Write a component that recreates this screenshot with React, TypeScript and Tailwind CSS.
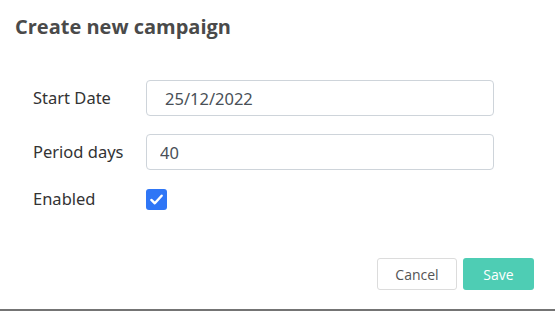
import React, { useState } from 'react';

export default function App() {
  const [startDate, setStartDate] = useState('25/12/2022');
  const [period, setPeriod] = useState('40');
  const [enabled, setEnabled] = useState(true);

  return (
    <div className="relative w-[555px] h-[311px] bg-white flex flex-col overflow-hidden font-['Noto_Sans',sans-serif]">
      {/* Header */}
      <div className="px-[15px] pt-[14px]">
        <h2 className="text-[20px] leading-[26px] font-bold text-[#4a4a4a] font-['Open_Sans',sans-serif]">
          Create new campaign
        </h2>
      </div>

      {/* Form */}
      <div className="flex flex-col gap-[18px] pl-[33px] pr-[61px] pt-[40px]">
        <div className="flex items-center h-[36px]">
          <label className="w-[113px] text-[16.5px] text-[#333]">Start Date</label>
          <input
            value={startDate}
            onChange={e => setStartDate(e.target.value)}
            className="flex-1 h-[36px] rounded-[4px] border border-[#ced4da] pl-[18px] text-[16.5px] text-[#495057] outline-none"
          />
        </div>
        <div className="flex items-center h-[36px]">
          <label className="w-[113px] text-[16.5px] text-[#333]">Period days</label>
          <input
            value={period}
            onChange={e => setPeriod(e.target.value)}
            className="flex-1 h-[36px] rounded-[4px] border border-[#ced4da] pl-[13px] text-[16.5px] text-[#495057] outline-none"
          />
        </div>
        <div className="flex items-center h-[24px] -mt-[1px]">
          <label className="w-[113px] text-[16.5px] text-[#333]">Enabled</label>
          <button
            onClick={() => setEnabled(v => !v)}
            className={`w-[21px] h-[21px] rounded-[3px] flex items-center justify-center ${enabled ? 'bg-[#2f76f6]' : 'border border-[#999] bg-white'}`}
          >
            {enabled && (
              <svg width="15" height="15" viewBox="0 0 16 16" fill="none">
                <path d="M2.5 8.5 L6.2 12 L13.5 4" stroke="white" strokeWidth="2.6" strokeLinecap="round" strokeLinejoin="round" />
              </svg>
            )}
          </button>
        </div>
      </div>

      {/* Footer */}
      <div className="flex justify-end gap-[6px] pr-[21px] mt-[47px]">
        <button className="w-[80px] h-[32px] rounded-[3px] border border-[#dcdcdc] bg-white text-[14px] text-[#555] font-['Open_Sans',sans-serif]">
          Cancel
        </button>
        <button className="w-[71px] h-[32px] rounded-[3px] bg-[#4ecdb4] text-[14px] text-white font-['Open_Sans',sans-serif]">
          Save
        </button>
      </div>

      {/* page behind the modal */}
      <div className="absolute left-0 right-0 bottom-0 h-[2px] bg-[#747474]" />
    </div>
  );
}
